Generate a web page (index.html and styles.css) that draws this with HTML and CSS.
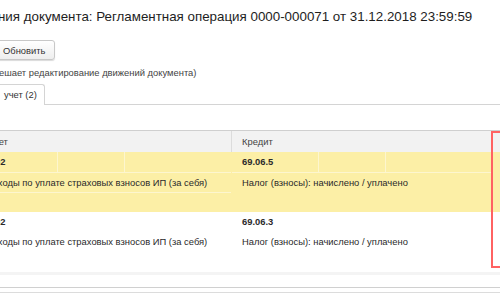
FILE: index.html
```html
<!DOCTYPE html>
<html lang="ru">
<head>
  <meta charset="UTF-8" />
  <title>Движения документа</title>
  <link rel="stylesheet" href="styles.css">
</head>
<body>
  <div class="page">
    <h1 class="title">ния документа: Регламентная операция 0000-000071 от 31.12.2018 23:59:59</h1>

    <div class="toolbar">
      <button class="btn">Обновить</button>
    </div>

    <div class="note">ешает редактирование движений документа)</div>

    <div class="tabs">
      <div class="tab">учет (2)</div>
    </div>

    <div class="grid">
      <div class="row head">
        <div class="col debit"><div class="cell">Дебет</div></div>
        <div class="col credit"><div class="cell">Кредит</div></div>
        <div class="col extra"></div>
      </div>

      <!-- строка 1 (выделена) -->
      <div class="row rec selected">
        <div class="col debit">
          <div class="sub">
            <div class="cell w1 bold">91.02</div>
            <div class="cell w2"></div>
            <div class="cell w3"></div>
          </div>
          <div class="sub"><div class="cell">Расходы по уплате страховых взносов ИП (за себя)</div></div>
          <div class="sub"><div class="cell"></div></div>
        </div>
        <div class="col credit">
          <div class="sub">
            <div class="cell w1 bold">69.06.5</div>
            <div class="cell w2"></div>
            <div class="cell w3"></div>
          </div>
          <div class="sub tall"><div class="cell">Налог (взносы): начислено / уплачено</div></div>
        </div>
        <div class="col extra"></div>
      </div>

      <!-- строка 2 -->
      <div class="row rec">
        <div class="col debit">
          <div class="sub"><div class="cell bold">91.02</div></div>
          <div class="sub"><div class="cell">Расходы по уплате страховых взносов ИП (за себя)</div></div>
          <div class="sub"><div class="cell"></div></div>
        </div>
        <div class="col credit">
          <div class="sub"><div class="cell bold">69.06.3</div></div>
          <div class="sub tall"><div class="cell">Налог (взносы): начислено / уплачено</div></div>
        </div>
        <div class="col extra"></div>
      </div>

      <div class="highlight"></div>
    </div>

    <div class="footer"></div>
    <div class="bar"></div>
  </div>
</body>
</html>
```

FILE: styles.css
```css
body {
  margin: 0;
  background: #fff;
  font-family: "Liberation Sans", Arial, sans-serif;
  color: #333;
  overflow: hidden;
}

.page {
  width: 560px;
}

.title {
  margin: 0 0 0 -2px;
  padding-top: 9px;
  height: 23px;
  font-size: 13.35px;
  line-height: 16px;
  font-weight: normal;
  color: #1e1e1e;
  white-space: nowrap;
}

.toolbar {
  display: flex;
  margin-top: 8px;
}

.btn {
  height: 20px;
  margin-left: -8px;
  padding: 0 9px 0 10px;
  border: 1px solid #c8c8c8;
  border-radius: 3px;
  background: linear-gradient(#ffffff, #eeeeee);
  box-shadow: 0 1px 1px rgba(0, 0, 0, 0.15);
  font-family: inherit;
  font-size: 9.4px;
  color: #333;
}

.note {
  margin-top: 6px;
  margin-left: -1px;
  height: 14px;
  font-size: 9.4px;
  line-height: 14px;
  color: #444;
}

.tabs {
  display: flex;
  height: 20px;
  margin-top: 4px;
  border-bottom: 1px solid #d4d4d4;
}

.tab {
  box-sizing: border-box;
  height: 21px;
  margin: 0 0 -1px -10px;
  padding: 0 7px 0 13px;
  line-height: 19px;
  font-size: 9.4px;
  color: #333;
  border: 1px solid #d4d4d4;
  border-bottom: none;
  border-radius: 0 3px 0 0;
  background: #fff;
}

/* Таблица движений */
.grid {
  position: relative;
  margin-top: 25px;
  margin-left: -28px;
  border-top: 1px solid #cfcfcf;
  font-size: 9.4px;
}

.row {
  display: flex;
}

.col {
  flex: none;
}

.debit {
  width: 259px;
  border-right: 1px solid #dcdcdc;
}

.credit {
  width: 260px;
}

.extra {
  flex: 1;
}

.head {
  height: 21px;
  background: #f2f2f2;
}

.head .cell {
  line-height: 21px;
  color: #444;
}

.rec {
  height: 60px;
}

.rec .debit {
  border-right-color: transparent;
}

.selected {
  background: #fcefa6;
}

.sub {
  display: flex;
  height: 20px;
  box-sizing: border-box;
}

.sub.tall {
  height: 40px;
}

.selected .sub + .sub {
  border-top: 1px solid #fdf6cf;
}

.cell {
  flex: 1;
  padding-left: 10px;
  line-height: 20px;
  white-space: nowrap;
  color: #2a2a2a;
}

.cell.w1 {
  flex: none;
  width: 76px;
}

.cell.w2 {
  flex: none;
  width: 56px;
}

.selected .cell.w1,
.selected .cell.w2 {
  border-right: 1px solid #fdf6cf;
}

.debit .cell.w1 {
  width: 75px;
}

.bold {
  font-weight: bold;
}

/* выделение колонки поверх таблицы */
.highlight {
  position: absolute;
  left: 519px;
  top: 0;
  width: 60px;
  height: 137px;
  border: 2px solid #ff6262;
  box-sizing: border-box;
}

.footer {
  height: 12px;
  border-top: 3px solid #f4f4f4;
}

.bar {
  height: 4px;
  border-top: 1px solid #d0d0d0;
  border-bottom: 1px solid #dcdcdc;
}
```
